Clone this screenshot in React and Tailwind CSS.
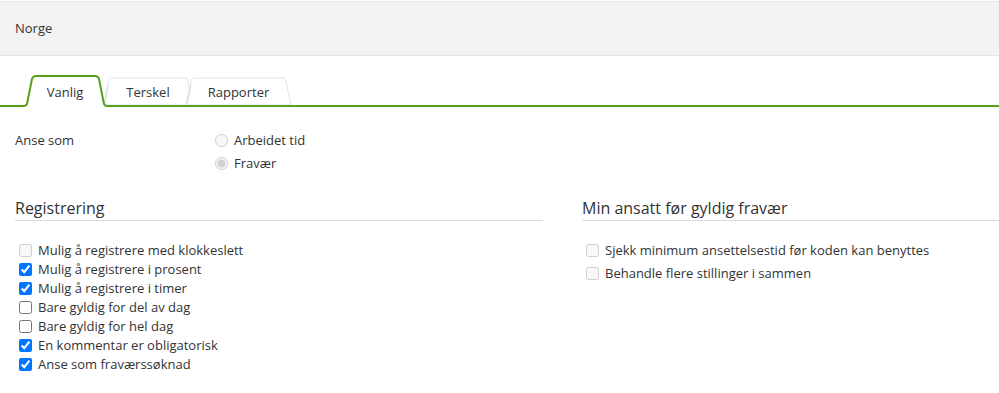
import React from "react";

const font = { fontFamily: '"Open Sans", "Liberation Sans", sans-serif' };

const ActiveTab = ({ label }) => (
  <div className="relative z-10 -mb-[2px] h-[32px] w-[86px] pt-[8px] text-center text-[13px] text-[#333]">
    <svg className="absolute inset-0" width="86" height="32" viewBox="0 0 86 32">
      <path d="M0 32 L0 31 H2 Q4 31 5 29 L10 4 Q11 1 14 1 H73 Q76 1 77 4 L82 29 Q83 31 85 31 H86 V32 Z" fill="#fff" />
      <path d="M0 31 H2 Q4 31 5 29 L10 4 Q11 1 14 1 H73 Q76 1 77 4 L82 29 Q83 31 85 31 H86" fill="none" stroke="#58a11e" strokeWidth="2" />
    </svg>
    <span className="relative">{label}</span>
  </div>
);

const Tab = ({ label, width, offset }) => (
  <div className={`relative h-[28px] pt-[6px] text-center text-[13px] text-[#333] ${width} ${offset}`}>
    <svg className="absolute inset-0 h-full w-full" preserveAspectRatio="none" viewBox="0 0 100 28">
      <path d="M0 28 L5 3 Q5.6 1 8 1 H92 Q94.4 1 95 3 L100 28 Z" fill="#fff" stroke="#dde5ec" strokeWidth="1" vectorEffect="non-scaling-stroke" />
      <path d="M1 27 L5 8" stroke="#c9c9c9" strokeWidth="1" vectorEffect="non-scaling-stroke" opacity="0.6" />
    </svg>
    <span className="relative">{label}</span>
  </div>
);

const Check = ({ label, checked, disabled }) => (
  <label className="flex h-[19px] items-center">
    <input type="checkbox" checked={checked} disabled={disabled} readOnly className="m-0 h-[13px] w-[13px]" />
    <span className="ml-[6px]">{label}</span>
  </label>
);

const Radio = ({ label, checked }) => (
  <label className="flex h-[23px] items-center">
    <input type="radio" checked={checked} disabled readOnly className="m-0 h-[13px] w-[13px]" />
    <span className="ml-[6px]">{label}</span>
  </label>
);

export default function App() {
  return (
    <div className="min-h-[393px] w-[999px] bg-white text-[13px] text-[#333]" style={font}>
      {/* header */}
      <div className="pt-[1px]">
        <div className="flex h-[55px] items-center border-y border-[#e4e4e4] bg-[#f3f3f3] px-[15px]">
          Norge
        </div>
      </div>

      {/* tabs */}
      <div className="mt-[19px] flex items-end border-b-2 border-[#58a11e] pl-[22px]">
        <ActiveTab label="Vanlig" />
        <Tab label="Terskel" width="w-[88px]" offset="-ml-[4px]" />
        <Tab label="Rapporter" width="w-[105px]" offset="-ml-[6px]" />
      </div>

      {/* anse som */}
      <div className="mt-[22px] flex px-[15px]">
        <div className="w-[200px] leading-[23px]">Anse som</div>
        <div className="flex flex-col">
          <Radio label="Arbeidet tid" />
          <Radio label="Fravær" checked />
        </div>
      </div>

      {/* sections */}
      <div className="mt-[22px] flex pl-[15px]">
        <div className="w-[528px]">
          <h3 className="border-b border-[#dcdcdc] pb-[1px] text-[16px] leading-[22px]">Registrering</h3>
          <div className="mt-[20px] flex flex-col pl-[4px]">
            <Check label="Mulig å registrere med klokkeslett" disabled />
            <Check label="Mulig å registrere i prosent" checked />
            <Check label="Mulig å registrere i timer" checked />
            <Check label="Bare gyldig for del av dag" />
            <Check label="Bare gyldig for hel dag" />
            <Check label="En kommentar er obligatorisk" checked />
            <Check label="Anse som fraværssøknad" checked />
          </div>
        </div>
        <div className="ml-[39px] flex-1">
          <h3 className="border-b border-[#dcdcdc] pb-[1px] text-[16px] leading-[22px]">Min ansatt før gyldig fravær</h3>
          <div className="mt-[20px] flex flex-col gap-[4px] pl-[4px]">
            <Check label="Sjekk minimum ansettelsestid før koden kan benyttes" disabled />
            <Check label="Behandle flere stillinger i sammen" disabled />
          </div>
        </div>
      </div>
    </div>
  );
}
